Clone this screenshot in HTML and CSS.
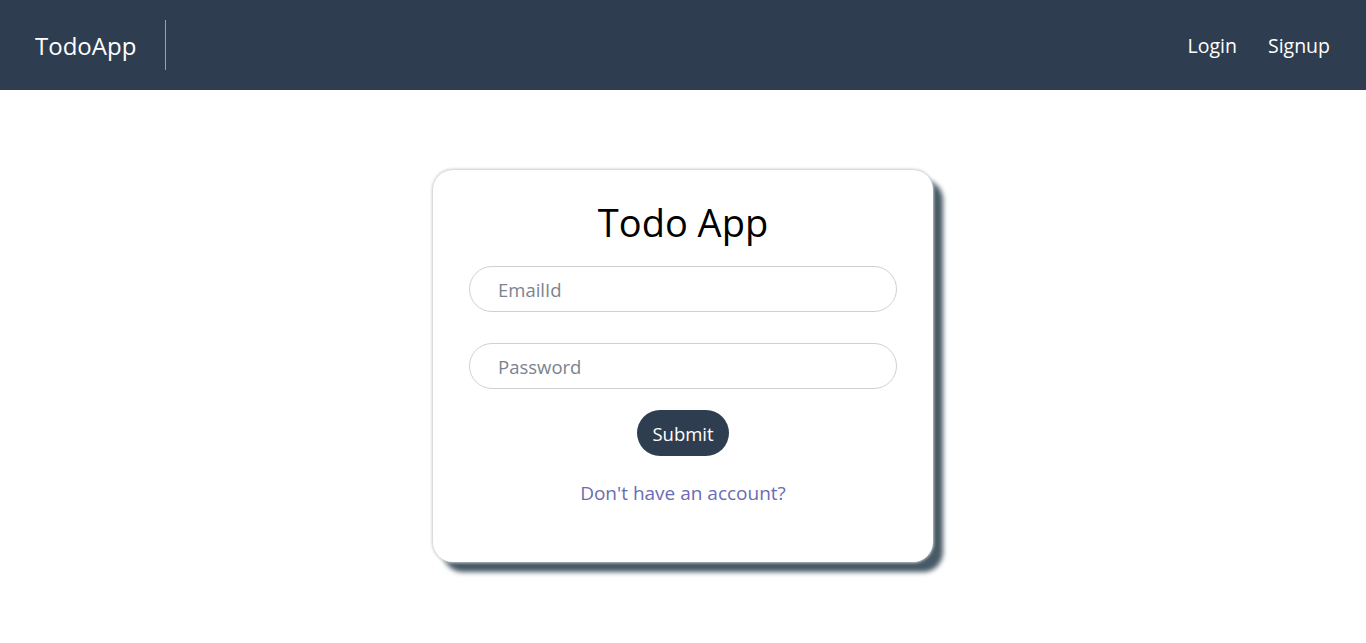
FILE: index.html
```html
<!DOCTYPE html>
<html lang="en">
<head>
<meta charset="utf-8">
<title>TodoApp</title>
<link rel="stylesheet" href="styles.css">
</head>
<body>
<header class="navbar">
  <div class="brand">TodoApp</div>
  <div class="divider"></div>
  <nav class="nav-links">
    <a href="#" class="nav-link">Login</a>
    <a href="#" class="nav-link">Signup</a>
  </nav>
</header>
<main class="main">
  <form class="card">
    <h1 class="title">Todo App</h1>
    <input class="field" type="text" placeholder="EmailId">
    <input class="field" type="password" placeholder="Password">
    <button class="submit" type="button">Submit</button>
    <a href="#" class="signup-link">Don't have an account?</a>
  </form>
</main>
</body>
</html>
```
FILE: styles.css
```css
* { box-sizing: border-box; }
html, body { background: #fff; }
body {
  margin: 0;
  font-family: "Open Sans", "Noto Sans", sans-serif;
  min-height: 100vh;
}
.navbar {
  height: 90px;
  background: #2e3e50;
  display: flex;
  align-items: center;
  padding: 0 36px 0 35px;
}
.brand {
  color: #fff;
  font-size: 24px;
  padding-right: 29px;
}
.divider {
  width: 1px;
  height: 50px;
  background: #9aa3ad;
}
.nav-links {
  margin-left: auto;
  display: flex;
  gap: 31px;
}
.nav-link {
  color: #fff;
  text-decoration: none;
  font-size: 19.5px;
}
.main {
  display: flex;
  justify-content: center;
  padding: 80px 0 60px;
}
.card {
  width: 500px;
  border-radius: 20px;
  box-shadow: 0 0 3px 1px #c4cbcf, 10px 10px 5px #475a65;
  padding: 26px 36px 54px;
  display: flex;
  flex-direction: column;
  align-items: center;
  background: #fff;
}
.title {
  margin: 0 0 18px;
  font-size: 38px;
  font-weight: 400;
  line-height: 52px;
  color: #000;
}
.field {
  width: 100%;
  height: 46px;
  border: 1px solid #cdd1d6;
  border-radius: 23px;
  padding: 1px 28px 0;
  font-family: inherit;
  font-size: 18.5px;
  margin-bottom: 31px;
  outline: none;
}
.field + .field { margin-bottom: 21px; }
.field::placeholder { color: #7b838f; }
.submit {
  height: 46px;
  padding: 0 15px;
  border: none;
  border-radius: 23px;
  background: #2e3e50;
  color: #fff;
  font-family: inherit;
  font-size: 18.5px;
}
.signup-link {
  margin-top: 22px;
  color: #6a6cb3;
  text-decoration: none;
  font-size: 19px;
  line-height: 30px;
}
```
